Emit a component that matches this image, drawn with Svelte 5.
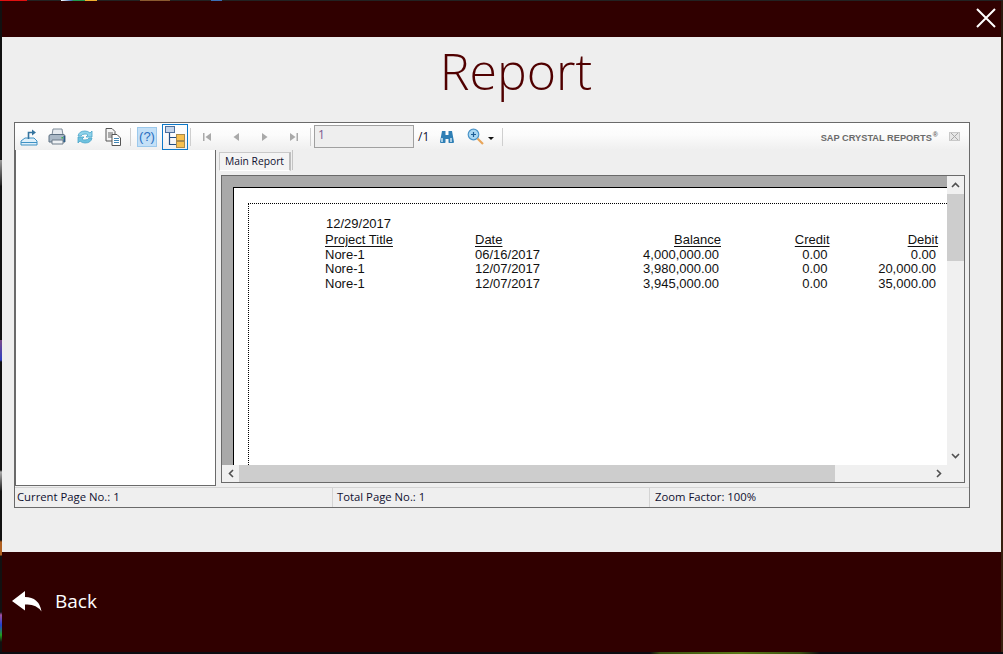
<script>
  const columns = [
    { key: 'title', label: 'Project Title' },
    { key: 'date', label: 'Date' },
    { key: 'balance', label: 'Balance', num: true },
    { key: 'credit', label: 'Credit', num: true },
    { key: 'debit', label: 'Debit', num: true }
  ];

  const rows = [
    { title: 'Nore-1', date: '06/16/2017', balance: '4,000,000.00', credit: '0.00', debit: '0.00' },
    { title: 'Nore-1', date: '12/07/2017', balance: '3,980,000.00', credit: '0.00', debit: '20,000.00' },
    { title: 'Nore-1', date: '12/07/2017', balance: '3,945,000.00', credit: '0.00', debit: '35,000.00' }
  ];
</script>

<div class="desktop">
  <div class="window">
    <header class="top">
      <button class="close" aria-label="Close">
        <svg width="20" height="20" viewBox="0 0 20 20"><path d="M1 1 L19 19 M19 1 L1 19" stroke="#fff" stroke-width="2" fill="none" /></svg>
      </button>
    </header>

    <main class="content">
      <h1>Report</h1>

      <div class="viewer">
        <div class="toolbar">
          <div class="tools">
            <span class="tool">
              <svg width="20" height="20" viewBox="0 0 20 20">
                <path d="M2 14 L6 11 H15 L18 14 V18 H2 Z" fill="#dff0fa" stroke="#3f92c4" />
                <path d="M2 15.5 H18" stroke="#3f92c4" />
                <path d="M9.5 12 V5.5 H13" fill="none" stroke="#35749f" stroke-width="1.6" />
                <path d="M13 2.5 L17 5.5 L13 8.5 Z" fill="#35749f" />
              </svg>
            </span>
            <span class="tool">
              <svg width="20" height="20" viewBox="0 0 20 20">
                <path d="M6 2 H15 L16 8 H5 Z" fill="#e6eaef" stroke="#7f8c99" />
                <path d="M2 9 Q2 7.5 4 7.5 H16 Q18 7.5 18 9 V15 H2 Z" fill="#aab8c6" stroke="#5d7082" />
                <path d="M5 13 H16 V17 H5 Z" fill="#eef1f4" stroke="#6f7d8a" />
                <path d="M16.5 9 H18 V15 H16.5 Z" fill="#2b5f8a" />
                <rect x="14.5" y="10" width="1.5" height="1.5" fill="#3bb54a" />
              </svg>
            </span>
            <span class="tool">
              <svg width="20" height="20" viewBox="0 0 20 20">
                <path d="M3 9 Q4 4 10 4 Q13 4 15 6 L17 4 V10 H11 L13 8 Q11.5 6.8 10 7 Q7 7 6 9 Z" fill="#8fd3ea" stroke="#4aa5c9" stroke-width=".8" />
                <path d="M17 11 Q16 16 10 16 Q7 16 5 14 L3 16 V10 H9 L7 12 Q8.5 13.2 10 13 Q13 13 14 11 Z" fill="#6fc2df" stroke="#4aa5c9" stroke-width=".8" />
              </svg>
            </span>
            <span class="tool">
              <svg width="20" height="20" viewBox="0 0 20 20">
                <path d="M3 1.5 H9 L12 4.5 V14 H3 Z" fill="#f4f4f4" stroke="#555" />
                <path d="M5 6 H10 M5 8 H10 M5 10 H10" stroke="#666" />
                <path d="M9 7.5 H14 L17.5 11 V18.5 H9 Z" fill="#fff" stroke="#555" />
                <path d="M11 11.5 H16 M11 13.5 H16 M11 15.5 H16" stroke="#3f86b5" />
              </svg>
            </span>
            <span class="sep wide"></span>
            <span class="tool help">(?)</span>
            <span class="tool tree">
              <svg width="24" height="24" viewBox="0 0 24 24">
                <rect x="2.5" y="1.5" width="9" height="6" fill="#c5d5ea" stroke="#4d6f9c" />
                <path d="M6.5 8 V19.5 H13 M6.5 12.5 H13" fill="none" stroke="#234e82" stroke-width="1.2" />
                <rect x="13.5" y="9.5" width="8" height="6" fill="#f7c04f" stroke="#a88a4b" />
                <rect x="13.5" y="16.5" width="8" height="6" fill="#f7c04f" stroke="#a88a4b" />
              </svg>
            </span>
            <span class="sep tight"></span>
            <span class="tool nav">
              <svg width="10" height="10" viewBox="0 0 10 10"><path d="M1 1 H2.5 V9 H1 Z M9 1 V9 L3.5 5 Z" fill="#a9a9a9" /></svg>
            </span>
            <span class="tool nav">
              <svg width="10" height="10" viewBox="0 0 10 10"><path d="M8 1 V9 L2.5 5 Z" fill="#a9a9a9" /></svg>
            </span>
            <span class="tool nav">
              <svg width="10" height="10" viewBox="0 0 10 10"><path d="M2 1 V9 L7.5 5 Z" fill="#a9a9a9" /></svg>
            </span>
            <span class="tool nav">
              <svg width="10" height="10" viewBox="0 0 10 10"><path d="M1 1 V9 L6.5 5 Z M7.5 1 H9 V9 H7.5 Z" fill="#a9a9a9" /></svg>
            </span>
            <span class="sep before-input"></span>
            <span class="page-input">1</span>
            <span class="page-total">/1</span>
            <span class="tool find">
              <svg width="16" height="14" viewBox="0 0 16 14">
                <path d="M3 1 H6.5 V5 H9.5 V1 H13 L15 12 Q15 13 14 13 H10 Q9.5 13 9.5 12 V9 H6.5 V12 Q6.5 13 6 13 H2 Q1 13 1 12 Z" fill="#2f7fb5" />
                <path d="M3 8 V12 M12 8 V12" stroke="#cfe7f5" stroke-width="1.5" />
              </svg>
            </span>
            <span class="tool zoom">
              <svg width="18" height="18" viewBox="0 0 18 18">
                <circle cx="6.5" cy="6.5" r="5.3" fill="#a9d7f2" stroke="#4b94c8" stroke-width="1.2" />
                <path d="M4 6.5 H9 M6.5 4 V9" stroke="#1d5d94" stroke-width="1.2" />
                <path d="M10.5 10.5 L16 16" stroke="#e8a55a" stroke-width="2.2" />
              </svg>
              <i class="caret"></i>
            </span>
            <span class="sep"></span>
          </div>
          <span class="brand">SAP CRYSTAL REPORTS<sup>®</sup></span>
          <span class="brand-close" aria-hidden="true">
            <svg width="9" height="7" viewBox="0 0 9 7"><path d="M1 0 L8 7 M8 0 L1 7" stroke="#a8a8a8" fill="none" /></svg>
          </span>
        </div>

        <div class="panes">
          <aside class="tree-pane"></aside>
          <section class="doc">
            <div class="tabs"><span class="tab">Main Report</span><i class="tab-tick"></i></div>
            <div class="page-frame">
              <div class="page-row">
                <div class="page-bg">
                  <div class="paper">
                    <div class="margin">
                      <div class="report">
                        <div class="print-date">12/29/2017</div>
                        <div class="report-grid">
                          {#each columns as col}
                            <div class="th" class:num={col.num}><span>{col.label}</span></div>
                          {/each}
                          {#each rows as row}
                            {#each columns as col}
                              <div class="td" class:num={col.num}>{row[col.key]}</div>
                            {/each}
                          {/each}
                        </div>
                      </div>
                    </div>
                  </div>
                </div>
                <div class="vscroll">
                  <svg width="9" height="6" viewBox="0 0 9 6"><path d="M1 5 L4.5 1.5 L8 5" fill="none" stroke="#505050" stroke-width="1.6" /></svg>
                  <div class="vtrack"><div class="vthumb"></div></div>
                  <svg width="9" height="6" viewBox="0 0 9 6"><path d="M1 1 L4.5 4.5 L8 1" fill="none" stroke="#505050" stroke-width="1.6" /></svg>
                </div>
              </div>
              <div class="hscroll">
                <svg width="6" height="9" viewBox="0 0 6 9"><path d="M5 1 L1.5 4.5 L5 8" fill="none" stroke="#505050" stroke-width="1.6" /></svg>
                <div class="htrack"><div class="hthumb"></div></div>
                <svg width="6" height="9" viewBox="0 0 6 9"><path d="M1 1 L4.5 4.5 L1 8" fill="none" stroke="#505050" stroke-width="1.6" /></svg>
              </div>
            </div>
          </section>
        </div>

        <div class="status">
          <span class="cell first">Current Page No.: 1</span>
          <span class="cell second">Total Page No.: 1</span>
          <span class="cell third">Zoom Factor: 100%</span>
        </div>
      </div>
    </main>

    <footer class="bottom">
      <button class="back">
        <svg width="30" height="21" viewBox="0 0 30 21">
          <path d="M0 10 L13 0 V6 Q27 6 29.5 20.5 Q24 12.5 13 13.5 V19.5 Z" fill="#fff" />
        </svg>
        <span>Back</span>
      </button>
    </footer>
  </div>
</div>

<style>
  :global(body) {
    margin: 0;
    background: #0c0c10;
  }

  .desktop {
    width: 1003px;
    height: 654px;
    box-sizing: border-box;
    padding: 1px 2px 2px 2px;
    overflow: hidden;
    background:
      linear-gradient(90deg, #e01010 0, #e01010 27px, #222 27px, #222 61px, #fff 61px, #3b6fb5 72px, #1f9a50 73px, #1f9a50 85px, #f0b030 85px, #f0b030 97px, #222 97px, #222 140px, #8a5a30 140px, #8a5a30 170px, #222 170px, #222 211px, #3b6fb5 211px, #3b6fb5 222px, #222 222px) top / 100% 1px no-repeat,
      linear-gradient(90deg, #0c0c10 0, #0c0c10 650px, #3a5210 660px, #5a7a18 740px, #3a5210 800px, #0c0c10 820px) bottom / 100% 2px no-repeat,
      linear-gradient(180deg, #111 0, #111 160px, #999 160px, #222 185px, #111 186px, #111 340px, #7a4a8a 340px, #3040c0 360px, #111 362px, #111 470px, #aaa 472px, #222 490px, #111 491px, #111 540px, #b06020 542px, #b06020 555px, #111 556px, #111 612px, #a050a0 615px, #2040d0 625px, #20a020 635px, #111 642px) left / 2px 100% no-repeat,
      linear-gradient(180deg, #2a1a10 0, #3a2010 100%) right / 2px 100% no-repeat,
      #0c0c10;
  }

  .window {
    height: 100%;
    display: flex;
    flex-direction: column;
    background: #eee;
  }

  .top {
    height: 36px;
    flex: none;
    display: flex;
    justify-content: flex-end;
    align-items: center;
    background: #300000;
  }

  button {
    border: 0;
    padding: 0;
    background: none;
    color: inherit;
    font: inherit;
  }

  .close {
    display: flex;
    margin-right: 5px;
    margin-top: -3px;
  }

  .content {
    flex: 1;
    min-height: 0;
    padding: 0 31px 0 12px;
  }

  h1 {
    margin: 0;
    height: 85px;
    padding: 3px 0 0 48px;
    box-sizing: border-box;
    text-align: center;
    font-family: "Open Sans", "Noto Sans", sans-serif;
    font-weight: 300;
    font-size: 50px;
    line-height: 62px;
    color: #500000;
  }

  .viewer {
    width: 956px;
    height: 386px;
    box-sizing: border-box;
    display: flex;
    flex-direction: column;
    border: 1px solid #6a6a6a;
    background: #efefef;
    font-family: "Open Sans", "Noto Sans", sans-serif;
    font-size: 11px;
    color: #101030;
  }

  .toolbar {
    height: 27px;
    flex: none;
    display: flex;
    align-items: center;
    padding: 0 9px 0 0;
    background: linear-gradient(#fff, #fbfbfb 45%, #efefef);
  }

  .tools {
    flex: 1;
    display: flex;
    align-items: center;
    height: 100%;
  }

  .tool {
    display: flex;
    align-items: center;
    justify-content: center;
    width: 28px;
    height: 26px;
    flex: none;
  }

  .sep {
    width: 1px;
    height: 18px;
    margin: 0 2px;
    background: #cfcfcf;
    flex: none;
  }

  .sep.wide {
    margin: 0 2px 0 3px;
  }

  .sep.tight {
    margin: 0 1px 0 0;
  }

  .sep.before-input {
    margin: 0 3px 0 2px;
  }

  .help {
    width: 20px;
    height: 20px;
    margin: 0 5px 0 4px;
    box-sizing: border-box;
    background: #c4e0f7;
    border: 1px solid #9cc9ec;
    color: #2a6fc0;
    font-family: "Liberation Sans", sans-serif;
    font-size: 13px;
  }

  .tree {
    width: 26px;
    height: 26px;
    margin-right: 2px;
    box-sizing: border-box;
    border: 1px solid #0c78c8;
  }

  .nav {
    width: 29px;
  }

  .page-input {
    width: 100px;
    height: 23px;
    box-sizing: border-box;
    padding-left: 3px;
    border: 1px solid #a0a0a0;
    background: #eee;
    color: #7c5a90;
    font-size: 12px;
    line-height: 18px;
  }

  .page-total {
    margin-left: 4px;
    width: 17px;
    font-size: 12px;
  }

  .find {
    width: 18px;
    margin-left: 3px;
  }

  .zoom {
    width: 30px;
    margin-left: 11px;
    margin-right: 3px;
    justify-content: flex-start;
    gap: 3px;
  }

  .caret {
    width: 0;
    height: 0;
    margin-top: 4px;
    border: 3px solid transparent;
    border-top: 3px solid #111;
    border-bottom: 0;
  }

  .brand {
    font-family: "Liberation Sans", sans-serif;
    font-size: 9.25px;
    font-weight: 700;
    color: #6a6a6a;
    white-space: nowrap;
    margin-top: 3px;
  }

  .brand sup {
    font-size: 7px;
    line-height: 0;
    margin-left: 1px;
  }

  .brand-close {
    width: 9px;
    height: 7px;
    margin-left: 11px;
    border: 1px solid #c8c8c8;
    display: flex;
    align-items: center;
    justify-content: center;
    background: #e6e6e6;
  }

  .panes {
    flex: 1;
    min-height: 0;
    display: flex;
  }

  .tree-pane {
    width: 201px;
    flex: none;
    box-sizing: border-box;
    border: 1px solid #6a6a6a;
    border-top: 0;
    background: #fff;
    margin-bottom: 1px;
  }

  .doc {
    flex: 1;
    min-width: 0;
    display: flex;
    flex-direction: column;
    padding: 0 4px 4px 3px;
  }

  .tabs {
    height: 25px;
    flex: none;
    display: flex;
    align-items: flex-start;
    gap: 1px;
    padding-top: 2px;
    box-sizing: border-box;
  }

  .tab {
    width: 72px;
    height: 19px;
    box-sizing: border-box;
    text-align: center;
    font-size: 10.3px;
    line-height: 17px;
    background: #f4f4f4;
    border: 1px solid #c9c9c9;
    border-right: 2px solid #bdbdbd;
    border-bottom-color: #fff;
  }

  .tab-tick {
    width: 1px;
    height: 20px;
    margin-top: -2px;
    background: #c4c4c4;
  }

  .page-frame {
    flex: 1;
    min-height: 0;
    margin-left: 2px;
    display: flex;
    flex-direction: column;
    border: 1px solid #6a6a6a;
  }

  .page-row {
    flex: 1;
    min-height: 0;
    display: flex;
  }

  .page-bg {
    flex: 1;
    min-width: 0;
    overflow: hidden;
    background: #a9a9a9;
    padding: 11px 0 0 11px;
    box-sizing: border-box;
  }

  .paper {
    height: 100%;
    background: #fff;
    border-top: 1px solid #000;
    border-left: 1px solid #000;
    padding: 15px 0 0 14px;
    box-sizing: border-box;
  }

  .margin {
    height: 100%;
    border-top: 1px dotted #000;
    border-left: 1px dotted #000;
    padding: 13px 0 0 76px;
    box-sizing: border-box;
  }

  .report {
    width: 700px;
    font-family: "Liberation Sans", Arial, sans-serif;
    font-size: 13px;
    color: #111;
    line-height: 14.5px;
  }

  .print-date {
    padding-left: 1px;
    margin-bottom: 1px;
  }

  .report-grid {
    display: grid;
    grid-template-columns: 150px 96px 150px 108.5px 108.5px;
  }

  .th {
    height: 15px;
  }

  .th span {
    text-decoration: underline;
    text-underline-offset: 2px;
  }

  .num {
    text-align: right;
  }

  .td.num {
    padding-right: 2px;
  }

  .vscroll {
    width: 17px;
    flex: none;
    display: flex;
    flex-direction: column;
    align-items: center;
    background: #f0f0f0;
    padding: 6px 0;
    box-sizing: border-box;
    gap: 6px;
  }

  .vtrack {
    flex: 1;
    width: 100%;
  }

  .vthumb {
    height: 67px;
    background: #cdcdcd;
  }

  .hscroll {
    height: 17px;
    flex: none;
    display: flex;
    align-items: center;
    background: #f0f0f0;
    padding: 0 22px 0 6px;
    gap: 5px;
  }

  .htrack {
    flex: 1;
    height: 100%;
  }

  .hthumb {
    width: 596px;
    height: 100%;
    background: #cdcdcd;
  }

  .status {
    height: 20px;
    flex: none;
    display: flex;
    align-items: center;
    border-top: 1px solid #d4d4d4;
    box-sizing: border-box;
    font-size: 11.3px;
  }

  .cell {
    padding-left: 2px;
    height: 100%;
    line-height: 18px;
    white-space: nowrap;
  }

  .first {
    width: 315px;
    flex: none;
    border-right: 1px solid #d4d4d4;
  }

  .second {
    width: 312px;
    flex: none;
    padding-left: 4px;
    border-right: 1px solid #d4d4d4;
  }

  .third {
    padding-left: 5px;
  }

  .bottom {
    height: 100px;
    flex: none;
    display: flex;
    align-items: center;
    box-sizing: border-box;
    padding-bottom: 2px;
    background: #300000;
  }

  .back {
    display: flex;
    align-items: center;
    gap: 13px;
    margin-left: 10px;
    color: #fff;
    font-family: "Open Sans", "Noto Sans", sans-serif;
    font-size: 19px;
  }
</style>
